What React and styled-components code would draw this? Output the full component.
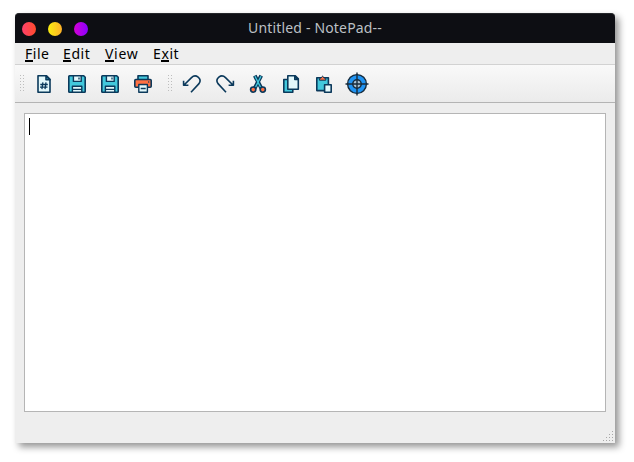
import React from 'react';
import styled, { createGlobalStyle } from 'styled-components';

const GlobalStyle = createGlobalStyle`
  * { box-sizing: border-box; }
  body { margin: 0; background: #fff; overflow: hidden; }
  #root { height: 462px; }
`;

const Desktop = styled.main`
  height: 462px;
  padding: 13px 19px 19px 15px;
  font-family: 'Noto Sans', 'Open Sans', sans-serif;
`;

const Window = styled.section`
  display: flex;
  flex-direction: column;
  width: 600px;
  height: 430px;
  background: #eeeeee;
  border-radius: 4px 4px 0 0;
  box-shadow: 4px 4px 7px rgba(0, 0, 0, 0.42);
`;

const TitleBar = styled.header`
  display: grid;
  grid-template-columns: 100px 1fr 100px;
  align-items: center;
  flex: 0 0 30px;
  background: #0d0e13;
  border-top: 1px solid #24262a;
  border-radius: 4px 4px 0 0;
`;

const Controls = styled.div`
  display: flex;
  gap: 12px;
  padding-left: 7px;
`;

const Control = styled.button`
  width: 14px;
  height: 14px;
  padding: 0;
  border: 0;
  border-radius: 50%;
  background: linear-gradient(90deg, ${(p) => p.$from}, ${(p) => p.$to});
`;

const Title = styled.h1`
  margin: 0;
  padding-bottom: 2px;
  text-align: center;
  font-size: 14px;
  line-height: 27px;
  font-weight: 400;
  letter-spacing: 0.17px;
  color: #bcc0c5;
  white-space: nowrap;
`;

const MenuBar = styled.nav`
  display: flex;
  flex: 0 0 22px;
  padding-left: 10px;
  border-bottom: 1px solid #d2d2d2;
`;

const MenuItem = styled.span`
  width: ${(p) => p.$width}px;
  font-size: 14px;
  line-height: 21px;
  letter-spacing: ${(p) => p.$spacing}px;
  color: #000;
  white-space: nowrap;
`;

const AccessKey = styled.span`
  display: inline-block;
  height: 19px;
  line-height: 21px;
  vertical-align: top;
  border-bottom: 2px solid #000;
`;

const ToolBar = styled.div`
  display: flex;
  align-items: center;
  flex: 0 0 38px;
  padding-left: 5px;
  background: linear-gradient(#f9f9f9, #ebebeb);
  border-bottom: 1px solid #b4b4b4;
`;

const Handle = styled.svg`
  width: 5px;
  height: 17px;
  margin-right: 7px;
  fill: #bdbdbd;
`;

const Tools = styled.div`
  display: flex;
  gap: 9px;
  margin-right: ${(p) => p.$after || 0}px;
`;

const Tool = styled.button`
  display: flex;
  width: 24px;
  height: 24px;
  padding: 0;
  border: 0;
  background: none;
`;

const Glyph = styled.svg`
  width: 24px;
  height: 24px;
  fill: none;
  stroke: #0b395b;
  stroke-width: ${(p) => p.$weight || 1.6};
  stroke-linejoin: round;
`;

const Editor = styled.div`
  flex: 1;
  margin: 10px 9px 0;
  padding: 4px 4px;
  background: #fff;
  border: 1px solid #b5b5b5;
`;

const Caret = styled.div`
  width: 1px;
  height: 17px;
  background: #000;
`;

const StatusBar = styled.footer`
  display: flex;
  justify-content: flex-end;
  align-items: flex-end;
  flex: 0 0 31px;
  padding: 0 2px 2px;
`;

const Grip = styled.svg`
  width: 10px;
  height: 10px;
  fill: #a8a8a8;
`;

const NewIcon = () => (
  <Glyph viewBox="0 0 24 24">
    <path d="M6 3.8h8.6L18 7.2v13H6z" fill="#e3f8fb" />
    <path d="M14 4v3.8h4z" fill="#46c9dc" />
    <path d="M10.9 10.4 9.9 17.2M14 10.4 13 17.2M8.3 12.5h7.5M8 15.2h7.5" strokeWidth="1.3" />
  </Glyph>
);

const SaveIcon = () => (
  <Glyph viewBox="0 0 24 24">
    <path d="M3.8 4.5q0-.7.7-.7h14.2l1.5 1.5v14.2q0 .7-.7.7h-15q-.7 0-.7-.7z" fill="#42c8dc" />
    <path d="M8.4 3.8h7.8v5.6H8.4zM7.4 14.3h9.4v5.9H7.4z" fill="#e3f8fb" strokeWidth="1.4" />
    <path d="M14 5.4v2M7.4 17.3h9.4" strokeWidth="1.3" />
  </Glyph>
);

const PrintIcon = () => (
  <Glyph viewBox="0 0 24 24">
    <path d="M7 3.8h10v5H7z" fill="#42c8dc" />
    <path d="M3.8 8.5q0-1 1-1h14.4q1 0 1 1v5.8q0 1-1 1H4.8q-1 0-1-1z" fill="#ff7042" />
    <path d="M7.8 12.5h8.6v7.7H7.8z" fill="#e3f8fb" strokeWidth="1.4" />
    <path d="M9.7 16.5h5M17.2 10h1" strokeWidth="1.3" />
  </Glyph>
);

const UndoIcon = () => (
  <Glyph viewBox="0 0 24 24">
    <path d="m3.8 13.2 7.7-7.6c4.2-4.2 11 .8 7.5 6L11 20.3M3.6 8.8v4.5h4.8" />
  </Glyph>
);

const RedoIcon = () => (
  <Glyph viewBox="0 0 24 24">
    <path d="m20.2 13.2-7.7-7.6C8.3 1.4 1.5 6.4 5 11.6l8 8.7M20.4 8.8v4.5h-4.8" />
  </Glyph>
);

const CutIcon = () => (
  <Glyph viewBox="0 0 24 24">
    <path d="m8.8 3.6 6.6 12.8M15.2 3.6 8.6 16.4" strokeWidth="3.9" />
    <path d="m9 4.3 6 11.8M15 4.3 9 16.1" stroke="#42c8dc" strokeWidth="1.3" />
    <circle cx="7.2" cy="17.6" r="2.6" fill="#ff7042" />
    <circle cx="16.8" cy="17.6" r="2.6" fill="#ff7042" />
  </Glyph>
);

const CopyIcon = () => (
  <Glyph viewBox="0 0 24 24">
    <path d="M4.8 7.5h9v12.7h-9z" fill="#42c8dc" />
    <path d="M8.8 3.8h7.5l3 3v10.4H8.8z" fill="#e3f8fb" />
    <path d="M15.8 4v3.4h3.4z" fill="#42c8dc" />
  </Glyph>
);

const PasteIcon = () => (
  <Glyph viewBox="0 0 24 24">
    <path d="M4.8 5.8h11.6v12.8H4.8z" fill="#42c8dc" />
    <path d="M7.4 8.2V6.6l2-.8q1.2-3.2 2.4 0l2 .8v1.6z" fill="#ff7042" strokeWidth="1" />
    <path d="M12.6 12.8h6.6v7.4h-6.6z" fill="#e3f8fb" />
  </Glyph>
);

const TargetIcon = () => (
  <Glyph viewBox="0 0 24 24">
    <circle cx="12" cy="12" r="9.4" fill="#2094f3" stroke="#172b3b" strokeWidth="1.4" />
    <circle cx="12" cy="12" r="4.2" fill="#a9c1d2" stroke="#172b3b" strokeWidth="1.5" />
    <path d="M12 .5v23M.5 12h23" stroke="#172b3b" strokeWidth="1.4" />
  </Glyph>
);

const fileTools = [['New', NewIcon], ['Save', SaveIcon], ['Save As', SaveIcon], ['Print', PrintIcon]];
const editTools = [['Undo', UndoIcon], ['Redo', RedoIcon], ['Cut', CutIcon], ['Copy', CopyIcon], ['Paste', PasteIcon], ['Find', TargetIcon]];
const gripDots = [[9, 0], [6, 3], [9, 3], [3, 6], [6, 6], [9, 6], [0, 9], [3, 9], [6, 9], [9, 9]];
const handleRows = [0, 3, 6, 9, 12, 15];

const ToolGroup = ({ items, after }) => (
  <>
    <Handle viewBox="0 0 5 17" shapeRendering="crispEdges">
      {handleRows.map((y) => (
        <path key={y} d={`M0 ${y}h1v1H0zM3 ${y}h1v1H3z`} />
      ))}
    </Handle>
    <Tools $after={after}>
      {items.map(([name, Icon]) => (
        <Tool key={name} aria-label={name}><Icon /></Tool>
      ))}
    </Tools>
  </>
);

export default function App() {
  return (
    <Desktop>
      <GlobalStyle />
      <Window>
        <TitleBar>
          <Controls>
            <Control aria-label="Close" $from="#ff416c" $to="#ff4b2b" />
            <Control aria-label="Minimize" $from="#f9ee10" $to="#ffb028" />
            <Control aria-label="Maximize" $from="#d400d4" $to="#8a00ff" />
          </Controls>
          <Title>Untitled - NotePad--</Title>
        </TitleBar>
        <MenuBar>
          <MenuItem $width={38} $spacing={0.5}><AccessKey>F</AccessKey>ile</MenuItem>
          <MenuItem $width={42} $spacing={0.6}><AccessKey>E</AccessKey>dit</MenuItem>
          <MenuItem $width={48} $spacing={0.7}><AccessKey>V</AccessKey>iew</MenuItem>
          <MenuItem $width={40} $spacing={0.6}>E<AccessKey>x</AccessKey>it</MenuItem>
        </MenuBar>
        <ToolBar>
          <ToolGroup items={fileTools} after={13} />
          <ToolGroup items={editTools} />
        </ToolBar>
        <Editor><Caret /></Editor>
        <StatusBar>
          <Grip viewBox="0 0 10 10">
            {gripDots.map(([x, y]) => <rect key={`${x}-${y}`} x={x} y={y} width="1" height="1" />)}
          </Grip>
        </StatusBar>
      </Window>
    </Desktop>
  );
}
